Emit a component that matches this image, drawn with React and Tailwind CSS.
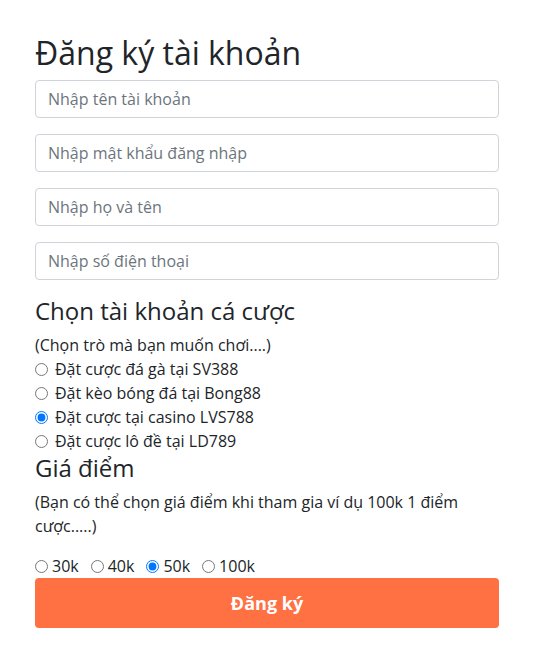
import React from "react";

const font = { fontFamily: '"Open Sans", "Noto Sans", sans-serif' };

function Radio({ label, checked, name, tight }) {
  return (
    <label className="flex items-center h-6">
      <input
        type="radio"
        name={name}
        defaultChecked={checked}
        className={
          tight
            ? "m-0 mr-[4px] w-[13px] h-[13px] accent-[#0075ff]"
            : "m-0 mr-[7px] w-[13px] h-[13px] accent-[#0075ff]"
        }
      />
      <span>{label}</span>
    </label>
  );
}

export default function App() {
  const inputs = [
    "Nhập tên tài khoản",
    "Nhập mật khẩu đăng nhập",
    "Nhập họ và tên",
    "Nhập số điện thoại",
  ];
  const games = [
    "Đặt cược đá gà tại SV388",
    "Đặt kèo bóng đá tại Bong88",
    "Đặt cược tại casino LVS788",
    "Đặt cược lô đề tại LD789",
  ];
  const prices = ["30k", "40k", "50k", "100k"];
  return (
    <div className="w-[538px] h-[663px] bg-white" style={font}>
      <div className="ml-[35px] w-[464px] pt-[34px] text-[16px] leading-6 text-[#212529]">
        <h2 className="text-[32px] leading-[38px] mb-2 font-normal">Đăng ký tài khoản</h2>
        {inputs.map((p) => (
          <input
            key={p}
            type="text"
            placeholder={p}
            className="block w-full h-[38px] mb-4 px-3 border border-[#ced4da] rounded-[4px] text-[16px] placeholder:text-[#6c757d] outline-none"
          />
        ))}
        <h4 className="text-[24px] leading-[29px] mb-2 font-normal">Chọn tài khoản cá cược</h4>
        <p>(Chọn trò mà bạn muốn chơi....)</p>
        {games.map((g, i) => (
          <Radio key={g} name="game" label={g} checked={i === 2} />
        ))}
        <h4 className="text-[24px] leading-[29px] mb-2 font-normal">Giá điểm</h4>
        <p className="mb-4">(Bạn có thể chọn giá điểm khi tham gia ví dụ 100k 1 điểm cược.....)</p>
        <div className="flex items-center gap-[12px] h-6">
          {prices.map((p, i) => (
            <Radio key={p} name="price" label={p} checked={i === 2} tight />
          ))}
        </div>
        <button className="w-full h-[50px] rounded-[4px] bg-[#ff7043] text-white font-bold text-[18px]">
          Đăng ký
        </button>
      </div>
    </div>
  );
}
